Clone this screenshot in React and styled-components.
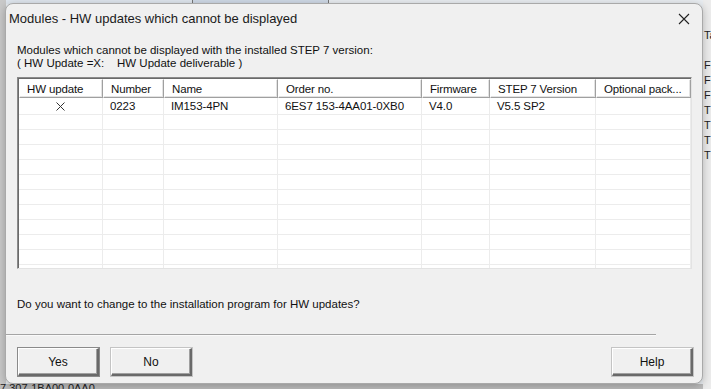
import React from "react";
import styled, { createGlobalStyle } from "styled-components";

const GlobalStyle = createGlobalStyle`
  html, body { margin: 0; padding: 0; }
  body {
    background: #cfcfcf;
    font-family: "Liberation Sans", Arial, sans-serif;
    color: #111;
  }
`;

const Desktop = styled.div`
  position: relative;
  width: 711px;
  height: 389px;
  overflow: hidden;
  background: #d6d6d6;
`;

/* window behind the dialog */
const BackWindow = styled.div`
  position: absolute;
  inset: 0;
  background: #e9edf1;
`;

const BackStrip = styled.div`
  position: absolute;
  left: ${(p) => p.$x}px;
  top: ${(p) => p.$y}px;
  width: ${(p) => p.$w}px;
  height: ${(p) => p.$h}px;
  background: ${(p) => p.$bg || "#c8c8c8"};
  border-right: ${(p) => (p.$line ? "1px solid #777" : "none")};
`;

const BackText = styled.div`
  position: absolute;
  left: ${(p) => p.$x}px;
  top: ${(p) => p.$y}px;
  font-size: 11px;
  line-height: 11px;
  color: #222;
  white-space: nowrap;
`;

const Dialog = styled.div`
  position: absolute;
  left: 5px;
  top: 3px;
  width: 698px;
  height: 381px;
  box-sizing: border-box;
  background: #f0f0f0;
  border: 1px solid #a9a9a9;
  border-radius: 8px;
  box-shadow: 0 2px 8px rgba(0, 0, 0, 0.25);
  display: flex;
  flex-direction: column;
  overflow: hidden;
`;

const TitleBar = styled.div`
  height: 29px;
  display: flex;
  align-items: center;
  justify-content: space-between;
  padding: 0 12px 0 3px;
`;

const Title = styled.div`
  font-size: 13px;
  color: #1a1a1a;
`;

const CloseButton = styled.div`
  width: 12px;
  height: 12px;
  display: flex;
  align-items: center;
  justify-content: center;
`;

const Content = styled.div`
  padding: 0 10px 0 11px;
  display: flex;
  flex-direction: column;
`;

const Intro = styled.div`
  margin-top: 11px;
  font-size: 11.5px;
  line-height: 13px;
  white-space: pre;
`;

const ListBox = styled.div`
  margin-top: 7px;
  height: 192px;
  box-sizing: border-box;
  border-top: 1px solid #8a8a8a;
  border-left: 1px solid #8a8a8a;
  border-right: 1px solid #e3e3e3;
  border-bottom: 1px solid #e3e3e3;
  background: #ffffff;
  overflow: hidden;
`;

const ListInner = styled.div`
  height: 100%;
  box-sizing: border-box;
  border-top: 1px solid #6a6a6a;
  border-left: 1px solid #6a6a6a;
  background: #ffffff;
`;

const cols = "84px 61px 114px 144px 68px 106px 95px";

const HeaderRow = styled.div`
  display: grid;
  grid-template-columns: ${cols};
  height: 19px;
`;

const HeaderCell = styled.div`
  box-sizing: border-box;
  padding-left: 7px;
  display: flex;
  align-items: center;
  font-size: 11.5px;
  letter-spacing: -0.15px;
  white-space: nowrap;
  overflow: hidden;
  background: #ffffff;
  border-top: 1px solid #ffffff;
  border-left: 1px solid #ffffff;
  border-right: 1px solid #a0a0a0;
  border-bottom: 1px solid #a0a0a0;
  box-shadow: inset -1px -1px 0 #e3e3e3;
`;

const Row = styled.div`
  display: grid;
  grid-template-columns: ${cols};
  height: 15px;
`;

const Cell = styled.div`
  box-sizing: border-box;
  padding-left: ${(p) => (p.$center ? 0 : 7)}px;
  justify-content: ${(p) => (p.$center ? "center" : "flex-start")};
  display: flex;
  align-items: center;
  font-size: 11.5px;
  letter-spacing: -0.1px;
  white-space: nowrap;
  border-right: 1px solid #ececec;
  border-bottom: 1px solid #ececec;
`;

const FirstRow = styled(Row)`
  height: 17px;
`;

const Question = styled.div`
  margin-top: 28px;
  font-size: 11.5px;
  line-height: 14px;
`;

const Separator = styled.div`
  margin-top: 23px;
  width: 650px;
  height: 1px;
  background: #a5a5a5;
  border-bottom: 1px solid #fafafa;
`;

const ButtonRow = styled.div`
  margin-top: 12px;
  padding: 0 9px 0 12px;
  display: flex;
  gap: 12px;
`;

const Button = styled.div`
  width: 81px;
  height: 28px;
  box-sizing: border-box;
  display: flex;
  align-items: center;
  justify-content: center;
  font-size: 12px;
  background: #f0f0f0;
  border-top: 1px solid #ffffff;
  border-left: 1px solid #ffffff;
  border-right: 2px solid #696969;
  border-bottom: 2px solid #696969;
  box-shadow: ${(p) =>
    p.$default
      ? "0 0 0 1px #8a8a8a, inset -1px -1px 0 #a0a0a0"
      : "inset -1px -1px 0 #a0a0a0, 0 0 0 1px #c4c4c4"};
  margin-left: ${(p) => (p.$push ? "auto" : "0")};
`;

const columns = [
  "HW update",
  "Number",
  "Name",
  "Order no.",
  "Firmware",
  "STEP 7 Version",
  "Optional pack...",
];

const data = ["X", "0223", "IM153-4PN", "6ES7 153-4AA01-0XB0", "V4.0", "V5.5 SP2", ""];

const emptyRows = 11;

function CloseIcon() {
  return (
    <svg width="12" height="12" viewBox="0 0 12 12">
      <path d="M1 1 L11 11 M11 1 L1 11" stroke="#222" strokeWidth="1.1" fill="none" />
    </svg>
  );
}

function CrossMark() {
  return (
    <svg width="9" height="9" viewBox="0 0 9 9">
      <path d="M0.5 0.5 L8.5 8.5 M8.5 0.5 L0.5 8.5" stroke="#333" strokeWidth="1" fill="none" />
    </svg>
  );
}

export default function App() {
  return (
    <>
      <GlobalStyle />
      <Desktop>
        <BackWindow />
        <BackStrip $x={0} $y={0} $w={192} $h={4} $bg="#dfe6ee" $line />
        <BackStrip $x={193} $y={0} $w={135} $h={4} $bg="#cfd9e6" $line />
        <BackStrip $x={455} $y={0} $w={50} $h={4} $bg="#e9edf1" />
        <BackStrip $x={0} $y={0} $w={6} $h={389} $bg="#c9c9c9" />
        <BackStrip $x={0} $y={384} $w={711} $h={5} $bg="#bdbdbd" />
        <BackStrip $x={703} $y={0} $w={8} $h={389} $bg="#ececec" />
        <BackText $x={0} $y={383}>7 307-1BA00-0AA0</BackText>
        <BackText $x={704} $y={30}>Ta</BackText>
        <BackText $x={704} $y={60}>FI</BackText>
        <BackText $x={704} $y={75}>FI</BackText>
        <BackText $x={704} $y={90}>FI</BackText>
        <BackText $x={704} $y={105}>T</BackText>
        <BackText $x={704} $y={120}>T</BackText>
        <BackText $x={704} $y={135}>T</BackText>
        <BackText $x={704} $y={150}>T</BackText>
        <Dialog>
          <TitleBar>
            <Title>Modules - HW updates which cannot be displayed</Title>
            <CloseButton>
              <CloseIcon />
            </CloseButton>
          </TitleBar>
          <Content>
            <Intro>
              {"Modules which cannot be displayed with the installed STEP 7 version:\n( HW Update =X:    HW Update deliverable )"}
            </Intro>
            <ListBox>
              <ListInner>
                <HeaderRow>
                  {columns.map((c) => (
                    <HeaderCell key={c}>{c}</HeaderCell>
                  ))}
                </HeaderRow>
                <FirstRow>
                  {data.map((v, j) =>
                    j === 0 ? (
                      <Cell key={j} $center>
                        {v === "X" ? <CrossMark /> : null}
                      </Cell>
                    ) : (
                      <Cell key={j}>{v}</Cell>
                    )
                  )}
                </FirstRow>
                {Array.from({ length: emptyRows }).map((_, i) => (
                  <Row key={"e" + i}>
                    {columns.map((c) => (
                      <Cell key={c} />
                    ))}
                  </Row>
                ))}
              </ListInner>
            </ListBox>
            <Question>Do you want to change to the installation program for HW updates?</Question>
          </Content>
          <Separator />
          <ButtonRow>
            <Button $default>Yes</Button>
            <Button>No</Button>
            <Button $push>Help</Button>
          </ButtonRow>
        </Dialog>
      </Desktop>
    </>
  );
}
